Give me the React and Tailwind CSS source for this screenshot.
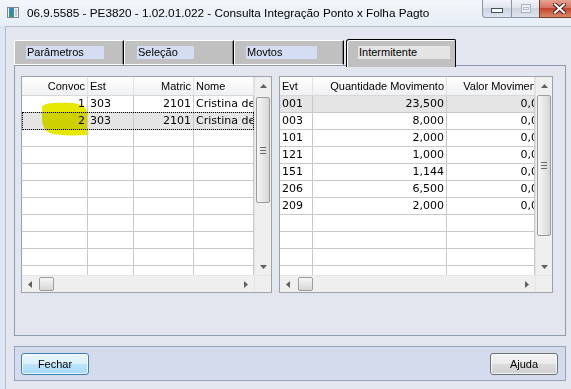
import React from 'react';

const leftCols = [
  { key: 'convoc', label: 'Convoc', w: 'w-[66px]', right: true },
  { key: 'est', label: 'Est', w: 'w-[46px]' },
  { key: 'matric', label: 'Matric', w: 'w-[60px]', right: true },
  { key: 'nome', label: 'Nome', w: 'w-[60px]' },
];

const leftRows = [
  { convoc: '1', est: '303', matric: '2101', nome: 'Cristina de Souza' },
  { convoc: '2', est: '303', matric: '2101', nome: 'Cristina de Souza' },
];

const rightCols = [
  { key: 'evt', label: 'Evt', w: 'w-[33px]' },
  { key: 'qtd', label: 'Quantidade Movimento', w: 'w-[134px]', right: true },
  { key: 'valor', label: 'Valor Movimento', w: 'w-[88px]', right: true, shift: true },
];

const rightRows = [
  { evt: '001', qtd: '23,500', valor: '0,00' },
  { evt: '003', qtd: '8,000', valor: '0,00' },
  { evt: '101', qtd: '2,000', valor: '0,00' },
  { evt: '121', qtd: '1,000', valor: '0,00' },
  { evt: '151', qtd: '1,144', valor: '0,00' },
  { evt: '206', qtd: '6,500', valor: '0,00' },
  { evt: '209', qtd: '2,000', valor: '0,00' },
];

const Arrow = ({ dir }) => {
  const paths = {
    up: 'M0 4 L3.5 0 L7 4 Z',
    down: 'M0 0 L7 0 L3.5 4 Z',
    left: 'M4 0 L4 7 L0 3.5 Z',
    right: 'M0 0 L4 3.5 L0 7 Z',
  };
  const vert = dir === 'up' || dir === 'down';
  return (
    <svg width={vert ? 7 : 4} height={vert ? 4 : 7} viewBox={vert ? '0 0 7 4' : '0 0 4 7'}>
      <path d={paths[dir]} fill="#606060" />
    </svg>
  );
};

const VScroll = ({ gap, thumb }) => (
  <div className="flex flex-col w-[17px] h-[198px] bg-[#efefef] border-l border-[#e2e2e2]">
    <div className="h-[18px] flex items-center justify-center shrink-0">
      <Arrow dir="up" />
    </div>
    <div style={{ height: gap }} className="shrink-0" />
    <div
      style={{ height: thumb }}
      className="shrink-0 mx-px rounded-[2px] border border-[#9c9c9c] bg-linear-to-r from-[#f7f7f7] to-[#d6d6d6] flex flex-col items-center justify-center gap-[2px]"
    >
      <div className="h-px w-[6px] bg-[#6a6a6a]" />
      <div className="h-px w-[6px] bg-[#6a6a6a]" />
      <div className="h-px w-[6px] bg-[#6a6a6a]" />
    </div>
    <div className="flex-1" />
    <div className="h-[17px] flex items-center justify-center shrink-0">
      <Arrow dir="down" />
    </div>
  </div>
);

const HScroll = ({ width, gap }) => (
  <div style={{ width }} className="flex h-[17px] bg-[#efefef] border-t border-[#e6e6e6]">
    <div className="w-[16px] flex items-center justify-center shrink-0">
      <Arrow dir="left" />
    </div>
    <div style={{ width: gap }} className="shrink-0" />
    <div className="w-[15px] my-px shrink-0 rounded-[2px] border border-[#9c9c9c] bg-linear-to-b from-[#f7f7f7] to-[#d6d6d6]" />
    <div className="flex-1" />
    <div className="w-[16px] flex items-center justify-center shrink-0">
      <Arrow dir="right" />
    </div>
  </div>
);

const Grid = ({ cols, rows, colsWidth, selected, focused, vgap, vthumb, hgap, children }) => {
  const body = Array.from({ length: 11 }, (_, i) => rows[i] || null);
  return (
    <div className="relative flex flex-col h-[217px] border border-[#9aa2ac] bg-white">
      <div className="flex h-[198px]">
        <div className="flex flex-col" style={{ width: colsWidth }}>
          <div className="flex h-[19px] shrink-0 border-b border-[#d8d8d8] bg-linear-to-b from-white to-[#f0f1f4] font-['Liberation_Sans',sans-serif] text-[11px]">
            {cols.map((c) => (
              <div
                key={c.key}
                className={`${c.w} shrink-0 flex items-center border-r border-[#e2e2e2] overflow-hidden whitespace-nowrap px-[2px] ${c.right ? 'justify-end' : ''}`}
              >
                <span className={c.shift ? '-mr-[13px]' : ''}>{c.label}</span>
              </div>
            ))}
          </div>
          <div className="h-[179px] overflow-hidden font-['DejaVu_Sans',sans-serif] text-[11px]">
            {body.map((r, i) => (
              <div
                key={i}
                className={`relative flex h-[17px] border-b border-[#c9c9c9] ${i === selected ? 'bg-[#e5e5e5]' : ''}`}
              >
                {cols.map((c) => (
                  <div
                    key={c.key}
                    className={`${c.w} shrink-0 flex items-center border-r border-[#c9c9c9] overflow-hidden whitespace-nowrap px-[2px] leading-[16px] ${c.right ? 'justify-end' : ''}`}
                  >
                    {r && <span className={c.shift ? '-mr-[13px]' : ''}>{r[c.key]}</span>}
                  </div>
                ))}
                {i === focused && (
                  <div className="absolute -top-px left-0 right-0 bottom-[-1px] border border-dotted border-black" />
                )}
              </div>
            ))}
          </div>
        </div>
        <VScroll gap={vgap} thumb={vthumb} />
      </div>
      <div className="flex h-[17px]">
        <HScroll width={colsWidth} gap={hgap} />
        <div className="w-[17px] bg-[#efefef] border-t border-l border-[#e6e6e6]" />
      </div>
      {children}
    </div>
  );
};

const tabs = [
  { label: 'Parâmetros', box: 'w-[78px] ml-[11px]' },
  { label: 'Seleção', box: 'w-[57px] ml-[12px]' },
  { label: 'Movtos', box: 'w-[71px] ml-[11px]' },
  { label: 'Intermitente', box: 'w-[92px] ml-[11px]', active: true },
];

const TitleBar = () => (
  <div className="flex h-[26px] shrink-0 bg-linear-to-b from-[#f3f6fa] to-[#e6edf5]">
    <div className="ml-[7px] mt-[7px] shrink-0">
      <svg width="12" height="11" viewBox="0 0 12 11">
        <defs>
          <linearGradient id="ticon" x1="0" y1="0" x2="0" y2="1">
            <stop offset="0" stopColor="#3b86cc" />
            <stop offset="1" stopColor="#2e9a6a" />
          </linearGradient>
        </defs>
        <rect x="0.5" y="0.5" width="11" height="10" fill="#f2f2f2" stroke="#7b8796" />
        <rect x="2" y="1" width="5" height="9" fill="url(#ticon)" />
        <rect x="8" y="2" width="2" height="7" fill="#c5cbd3" />
      </svg>
    </div>
    <div className="ml-[8px] mt-[6px] flex-1 text-[11.75px] leading-[14px] whitespace-nowrap font-['Liberation_Sans',sans-serif]">
      06.9.5585 - PE3820 - 1.02.01.022 - Consulta Integração Ponto x Folha Pagto
    </div>
    <div className="flex w-[89px] h-[18px] shrink-0">
      <div className="w-[29px] shrink-0 flex items-end justify-center pb-[4px] rounded-bl-[4px] border-l border-b border-[#8a96a6] bg-[linear-gradient(to_bottom,#f0f3f8_0%,#e0e6ee_45%,#ccd4e0_50%,#dde4ee_100%)]">
        <svg width="12" height="5" viewBox="0 0 12 5">
          <rect x="0.5" y="0.5" width="11" height="4" fill="#ffffff" stroke="#434e5e" />
        </svg>
      </div>
      <div className="w-[28px] shrink-0 flex items-center justify-center border-l border-b border-[#8a96a6] bg-[linear-gradient(to_bottom,#f0f3f8_0%,#e0e6ee_45%,#ccd4e0_50%,#dde4ee_100%)]">
        <svg width="10" height="9" viewBox="0 0 10 9">
          <rect x="0.5" y="0.5" width="9" height="8" fill="#eef1f5" stroke="#aab2be" />
          <rect x="2.5" y="3.5" width="5" height="2" fill="none" stroke="#b7bec8" />
        </svg>
      </div>
      <div className="w-[40px] shrink-0 flex items-center justify-center border-l border-b border-[#7a3a30] bg-[linear-gradient(to_bottom,#e9a393_0%,#d6735f_45%,#c2452e_50%,#d98767_100%)]">
        <svg width="13" height="11" viewBox="0 0 13 11">
          <path d="M2 1.5 L11 9.5 M11 1.5 L2 9.5" stroke="#4a2420" strokeWidth="4" strokeLinecap="square" />
          <path d="M2 1.5 L11 9.5 M11 1.5 L2 9.5" stroke="#ffffff" strokeWidth="2" strokeLinecap="square" />
        </svg>
      </div>
    </div>
  </div>
);

const Button = ({ children, primary }) => (
  <button
    className={`w-[68px] h-[22px] rounded-[3px] border text-[11px] leading-[20px] text-black font-['Liberation_Sans',sans-serif] shadow-[inset_0_0_0_1px_rgba(255,255,255,0.75)] ${
      primary
        ? 'border-[#3c7fb1] bg-[linear-gradient(to_bottom,#eaf6fd_0%,#d9f0fc_48%,#bee6fd_50%,#a7d9f5_100%)]'
        : 'border-[#707070] bg-[linear-gradient(to_bottom,#f2f2f2_0%,#ebebeb_48%,#dddddd_50%,#cfcfcf_100%)]'
    }`}
  >
    {children}
  </button>
);

export default function App() {
  return (
    <div className="w-[571px] h-[389px] overflow-hidden bg-[#dbe6f2] flex flex-col text-black font-['Liberation_Sans',sans-serif]">
      <TitleBar />
      <div className="flex-1 ml-[5px] border-l border-t border-[#b3bfcc] bg-[#e3e6ee] pl-[8px] pr-[5px] pt-[12px] flex flex-col">
        {/* tab strip */}
        <div className="flex items-end h-[26px]">
          {tabs.map((t) =>
            t.active ? (
              <div
                key={t.label}
                className="relative z-10 ml-[2px] w-[110px] h-[28px] -mb-[2px] pt-[6px] bg-[#c0c0c0] border-l border-t border-r border-black rounded-tl-[3px] rounded-tr-[2px] shadow-[inset_1px_1px_0_#ffffff]"
              >
                <div className={`${t.box} h-[13px] bg-[#e4e4e4] text-[11px] leading-[13px] pl-px whitespace-nowrap`}>
                  {t.label}
                </div>
              </div>
            ) : (
              <div
                key={t.label}
                className="w-[110px] h-[25px] pt-[5px] bg-[#c0c0c0] border-l border-t border-white border-r border-r-black border-b border-b-white shadow-[inset_-1px_0_0_#808080]"
              >
                <div className={`${t.box} h-[13px] bg-[#d5ddf2] text-[11px] leading-[13px] pl-px whitespace-nowrap`}>
                  {t.label}
                </div>
              </div>
            )
          )}
        </div>

        {/* tab page */}
        <div className="h-[271px] border border-[#8e9cae] pl-[6px] pt-[10px] flex gap-[7px]">
          <div className="w-[251px] shrink-0">
            <Grid
              cols={leftCols}
              rows={leftRows}
              colsWidth={232}
              selected={1}
              focused={1}
              vgap={2}
              vthumb={106}
              hgap={1}
            >
              <svg
                className="absolute left-[19px] top-[23px] pointer-events-none mix-blend-multiply"
                width="48"
                height="38"
                viewBox="0 0 48 38"
              >
                <path
                  d="M1 7 C1 3 15 2 32 3 C40 4 46 7 46 13 L46 35 C30 36 18 35 12 34 C4 32 1 27 1 17 Z"
                  fill="#e6e800"
                />
              </svg>
            </Grid>
          </div>
          <div className="w-[274px] shrink-0">
            <Grid
              cols={rightCols}
              rows={rightRows}
              colsWidth={255}
              selected={0}
              focused={-1}
              vgap={0}
              vthumb={141}
              hgap={2}
            />
          </div>
        </div>

        {/* button bar */}
        <div className="mt-[10px] h-[35px] border border-[#97a5b7] bg-[#d3dbed] pt-[6px] pl-[6px] pr-[7px] flex justify-between items-start">
          <Button primary>Fechar</Button>
          <Button>Ajuda</Button>
        </div>
      </div>
    </div>
  );
}
